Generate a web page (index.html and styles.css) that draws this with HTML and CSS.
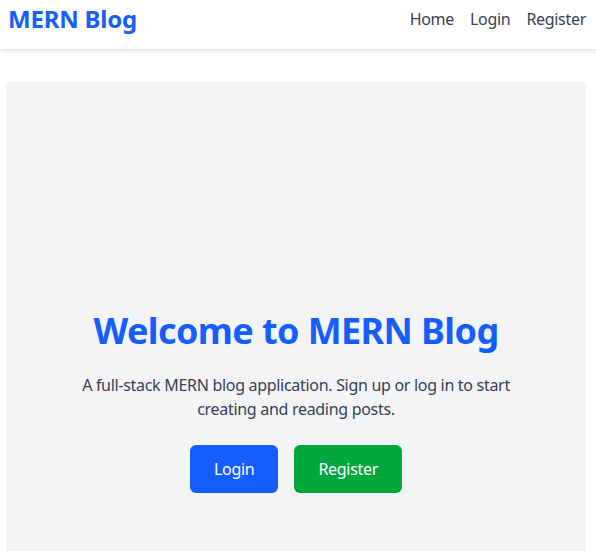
FILE: index.html
```html
<!DOCTYPE html>
<html lang="en">
<head>
<meta charset="utf-8">
<title>MERN Blog</title>
<link rel="stylesheet" href="styles.css">
</head>
<body>
<header class="navbar">
  <a class="logo" href="#">MERN Blog</a>
  <nav class="nav-links">
    <a href="#">Home</a>
    <a href="#">Login</a>
    <a href="#">Register</a>
  </nav>
</header>
<main class="main">
  <section class="hero">
    <h1 class="hero-title">Welcome to MERN Blog</h1>
    <p class="hero-text">A full-stack MERN blog application. Sign up or log in to start creating and reading posts.</p>
    <div class="hero-actions">
      <a class="btn btn-blue" href="#">Login</a>
      <a class="btn btn-green" href="#">Register</a>
    </div>
  </section>
</main>
</body>
</html>
```
FILE: styles.css
```css
* { box-sizing: border-box; }
html, body { margin: 0; padding: 0; }
body {
  font-family: "Noto Sans", "Open Sans", sans-serif;
  color: #364153;
  background: #fff;
  overflow: hidden;
  letter-spacing: -0.3px;
}
a { text-decoration: none; }
.navbar {
  height: 49px;
  display: flex;
  align-items: center;
  justify-content: space-between;
  padding: 3px 10px 14px 8px;
  background: #fff;
  box-shadow: 0 2px 4px rgba(0,0,0,0.12);
  position: relative;
}
.logo {
  font-size: 24px;
  font-weight: 700;
  color: #155dfc;
  line-height: 32px;
  letter-spacing: -0.2px;
}
.nav-links {
  display: flex;
  gap: 16px;
}
.nav-links a {
  font-size: 16px;
  color: #364153;
  line-height: 24px;
}
.main {
  padding: 33px 10px 0 6px;
}
.hero {
  background: #f3f4f6;
  min-height: 640px;
  display: flex;
  flex-direction: column;
  justify-content: center;
  align-items: center;
  text-align: center;
}
.hero-title {
  margin: 0 0 22px;
  font-size: 36px;
  line-height: 40px;
  font-weight: 700;
  color: #155dfc;
  letter-spacing: -0.6px;
}
.hero-text {
  margin: 0 0 24px;
  max-width: 448px;
  font-size: 16px;
  line-height: 24px;
  color: #364153;
}
.hero-actions {
  display: flex;
  gap: 16px;
}
.btn {
  display: inline-flex;
  align-items: center;
  justify-content: center;
  height: 48px;
  padding: 0 24px;
  border-radius: 6px;
  color: #fff;
  font-size: 16px;
}
.btn-blue { background: #155dfc; }
.btn-green { background: #00a63e; }
```
